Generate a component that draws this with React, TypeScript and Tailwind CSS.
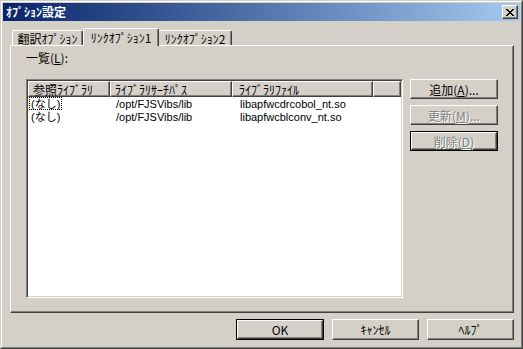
import type { ReactNode } from 'react'

// Windows 2000 風「オプション設定」ダイアログ
const raised =
  'border border-t-white border-l-white border-r-[#404040] border-b-[#404040] shadow-[inset_-1px_-1px_0_#808080]'

const closeGlyph = [
  'XX....XX',
  '.XX..XX.',
  '..XXXX..',
  '...XX...',
  '..XXXX..',
  '.XX..XX.',
  'XX....XX',
]

function CloseIcon() {
  return (
    <svg width="8" height="7" viewBox="0 0 8 7" shapeRendering="crispEdges">
      {closeGlyph.flatMap((row, y) =>
        row.split('').map((c, x) => (c === 'X' ? <rect key={`${x}-${y}`} x={x} y={y} width="1" height="1" fill="#000" /> : null))
      )}
    </svg>
  )
}

function Button({
  children,
  width,
  height,
  disabled,
  isDefault,
}: {
  children: ReactNode
  width: string
  height: string
  disabled?: boolean
  isDefault?: boolean
}) {
  const face = (
    <div
      className={`${raised} flex-1 flex items-center justify-center bg-[#d4d0c8] ${
        disabled ? 'text-[#808080] [text-shadow:1px_1px_0_#fff]' : 'text-black'
      }`}
    >
      {children}
    </div>
  )
  return (
    <div className={`${width} ${height} flex ${isDefault ? 'border border-black' : ''}`}>{face}</div>
  )
}

const rows = [
  { ref: '(なし)', path: '/opt/FJSVibs/lib', file: 'libapfwcdrcobol_nt.so' },
  { ref: '(なし)', path: '/opt/FJSVibs/lib', file: 'libapfwcblconv_nt.so' },
]

export default function App() {
  return (
    <div className="w-[523px] h-[349px] bg-[#d4d0c8] border border-t-[#d4d0c8] border-l-[#d4d0c8] border-r-[#404040] border-b-[#404040] font-['Noto_Sans_CJK_JP',sans-serif] text-[12px] leading-[13px] text-black select-none">
      <div className="h-full border border-t-white border-l-white border-r-[#808080] border-b-[#808080] p-px flex flex-col">
        {/* タイトルバー */}
        <div className="h-[18px] flex items-center justify-between pl-[3px] pr-[2px] bg-gradient-to-r from-[#0a246a] to-[#a6caf0]">
          <span className="text-white font-bold text-[12px] leading-[14px]">ｵﾌﾟｼｮﾝ設定</span>
          <div className={`${raised} w-[16px] h-[14px] bg-[#d4d0c8] flex items-center justify-center`}>
            <CloseIcon />
          </div>
        </div>

        <div className="flex-1 flex flex-col pl-[7px] pr-[6px]">
          {/* タブ */}
          <div className="mt-[7px] h-[17px] flex items-end pl-[2px]">
            <div className="w-[71px] h-[15px] border border-b-0 border-t-white border-l-white border-r-[#404040] rounded-t-[2px] shadow-[inset_-1px_0_0_#808080] flex items-center justify-center">
              翻訳ｵﾌﾟｼｮﾝ
            </div>
            <div className="relative z-10 -mb-px w-[76px] h-[18px] bg-[#d4d0c8] border border-b-0 border-t-white border-l-white border-r-[#404040] rounded-t-[2px] shadow-[inset_-1px_0_0_#808080] flex items-start pt-[2px] justify-center">
              ﾘﾝｸｵﾌﾟｼｮﾝ1
            </div>
            <div className="w-[73px] h-[15px] border border-b-0 border-t-white border-l-0 border-r-[#404040] rounded-t-[2px] shadow-[inset_-1px_0_0_#808080] flex items-center justify-center">
              ﾘﾝｸｵﾌﾟｼｮﾝ2
            </div>
          </div>

          {/* タブページ */}
          <div className={`${raised} h-[268px] pl-[15px] pt-[5px] flex flex-col`}>
            <div className="h-[14px] leading-[14px]">
              一覧(<span className="underline">L</span>):
            </div>
            <div className="mt-[14px] flex gap-[7px]">
              {/* リストビュー */}
              <div className="w-[377px] h-[219px] bg-white border border-t-[#808080] border-l-[#808080] border-r-white border-b-white shadow-[inset_1px_1px_0_#404040,inset_-1px_-1px_0_#d4d0c8] p-px">
                <div className="flex h-[16px]">
                  <div className={`${raised} bg-[#d4d0c8] w-[82px] pl-[4px] flex items-center`}>参照ﾗｲﾌﾞﾗﾘ</div>
                  <div className={`${raised} bg-[#d4d0c8] w-[122px] pl-[4px] flex items-center`}>ﾗｲﾌﾞﾗﾘｻｰﾁﾊﾟｽ</div>
                  <div className={`${raised} bg-[#d4d0c8] w-[141px] pl-[6px] flex items-center`}>ﾗｲﾌﾞﾗﾘﾌｧｲﾙ</div>
                  <div className={`${raised} bg-[#d4d0c8] flex-1`} />
                </div>
                {rows.map((row, i) => (
                  <div
                    key={i}
                    className="flex h-[13px] items-center font-['Liberation_Sans','Noto_Sans_CJK_JP',sans-serif] text-[11px] leading-[12px]"
                  >
                    <div className="w-[82px] pl-px flex">
                      <span
                        className={`px-[2px] h-[13px] flex items-center ${
                          i === 0 ? 'outline outline-1 outline-dotted outline-black -outline-offset-1' : ''
                        }`}
                      >
                        {row.ref}
                      </span>
                    </div>
                    <div className="w-[122px] pl-[6px]">{row.path}</div>
                    <div className="w-[141px] pl-[8px]">{row.file}</div>
                  </div>
                ))}
              </div>

              {/* 右側ボタン */}
              <div className="flex flex-col gap-[6px]">
                <Button width="w-[88px]" height="h-[20px]">
                  追加(<span className="underline">A</span>)...
                </Button>
                <Button width="w-[88px]" height="h-[20px]" disabled>
                  更新(<span className="underline">M</span>)...
                </Button>
                <Button width="w-[88px]" height="h-[20px]" disabled isDefault>
                  削除(<span className="underline">D</span>)
                </Button>
              </div>
            </div>
          </div>

          {/* 下部ボタン */}
          <div className="mt-[6px] flex justify-end gap-[8px]">
            <Button width="w-[88px]" height="h-[21px]" isDefault>
              OK
            </Button>
            <Button width="w-[87px]" height="h-[21px]">
              ｷｬﾝｾﾙ
            </Button>
            <Button width="w-[87px]" height="h-[21px]">
              ﾍﾙﾌﾟ
            </Button>
          </div>
        </div>
      </div>
    </div>
  )
}
